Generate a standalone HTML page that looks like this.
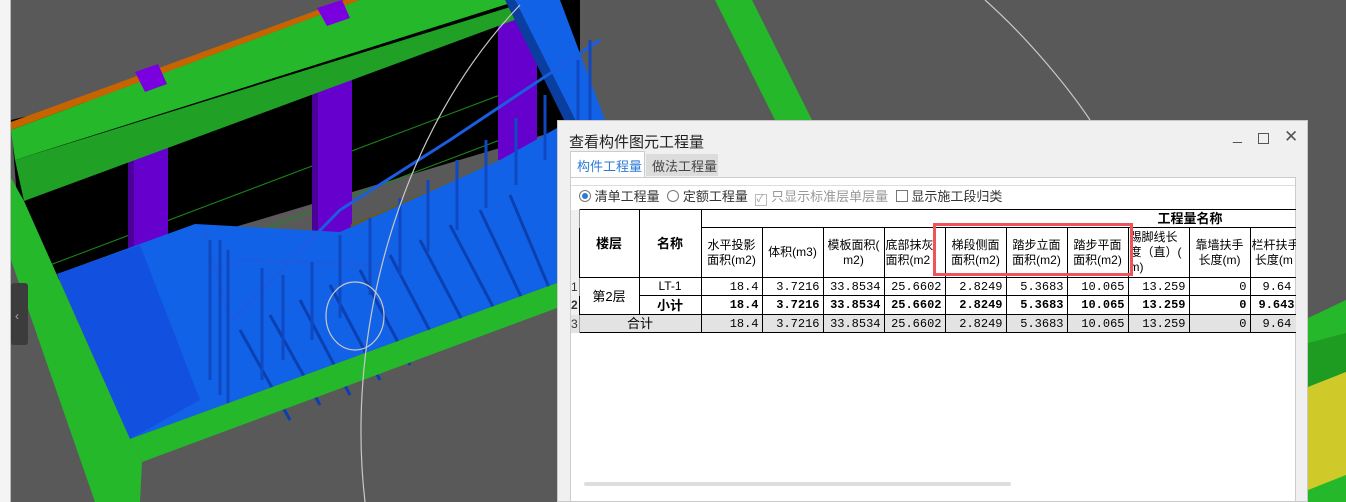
<!DOCTYPE html>
<html><head><meta charset="utf-8"><style>
*{margin:0;padding:0;box-sizing:border-box}
body{width:1346px;height:502px;overflow:hidden;background:#595959;position:relative;font-family:"Liberation Sans","Noto Sans CJK SC",sans-serif}
.abs{position:absolute}
#dlg{left:557px;top:120px;width:751px;height:382px;background:#f0f0f0;border:1px solid #c8c8c8}
.t{font-size:13px;color:#333}
table{border-collapse:collapse;table-layout:fixed;font-size:12px}
td{border:1px solid #000;height:18px;text-align:right;padding:0 3px;font-family:"Liberation Mono","Noto Sans CJK SC",monospace;font-size:12px;white-space:nowrap;overflow:hidden}
td.h{text-align:center;font-family:"Liberation Sans","Noto Sans CJK SC",sans-serif;line-height:15px;padding:0 1px}
td.rn{border:none;border-right:1px solid #999;background:#f0f0f0;text-align:left;padding:0;font-family:"Liberation Sans",sans-serif;color:#333}
tr.b td{font-weight:bold}
tr.g td{background:#e3e3e3}
</style></head><body>
<svg class="abs" style="left:0;top:0" width="1346" height="502">
<rect x="0" y="0" width="1346" height="502" fill="#595959"/>
<polygon points="11,120 520,0 580,0 580,130 560,130 24,290" fill="#000"/>
<line x1="50" y1="265" x2="500" y2="95" stroke="#1a8a1a" stroke-width="1"/>
<line x1="50" y1="310" x2="500" y2="140" stroke="#1a8a1a" stroke-width="1"/>
<polygon points="130,146 168,146 168,250 130,250" fill="#6600cc"/>
<polygon points="312,79 352,79 352,235 312,235" fill="#6600cc"/>
<polygon points="498,16 537,16 537,160 498,160" fill="#6600cc"/>
<rect x="128" y="146" width="6" height="104" fill="#4a0099"/>
<rect x="312" y="79" width="6" height="156" fill="#4a0099"/>
<polygon points="11,122 345,0 360,0 11,130" fill="#c86400"/>
<polygon points="11,130 360,0 520,0 15,160" fill="#25b82a"/>
<polygon points="15,160 520,4 520,18 24,201" fill="#20a024"/>
<polygon points="135,72 158,64 167,84 145,92" fill="#7a00e0"/>
<polygon points="317,8 342,0 350,18 327,26" fill="#7a00e0"/>
<polygon points="350,225 500,160 540,150 540,180 360,240" fill="#6b5a10"/>
<polygon points="57,274 195,224 340,232 500,160 557,128 557,283 130,439" fill="#1262e8"/>
<polygon points="57,274 140,245 200,400 130,439" fill="#1250e0"/>
<g stroke="#0a40b0" stroke-width="3">
<line x1="240" y1="330" x2="290" y2="420"/><line x1="270" y1="315" x2="320" y2="405"/>
<line x1="300" y1="300" x2="350" y2="395"/><line x1="330" y1="285" x2="380" y2="380"/>
<line x1="360" y1="270" x2="410" y2="365"/><line x1="390" y1="255" x2="440" y2="350"/>
<line x1="420" y1="240" x2="470" y2="335"/><line x1="450" y1="225" x2="500" y2="320"/>
<line x1="480" y1="210" x2="525" y2="305"/><line x1="510" y1="195" x2="550" y2="290"/>
</g>
<polygon points="515,0 560,0 605,120 580,130" fill="#1262e8"/>
<polygon points="505,0 515,0 578,125 568,128" fill="#0a3fa0"/>
<g stroke="#1a5de0" stroke-width="3" fill="none">
<path d="M205,232 L230,322 L340,210 L450,140 L600,40"/>
<path d="M210,270 L240,260 L380,265"/>
</g>
<g stroke="#0f48c0" stroke-width="3">
<line x1="210" y1="240" x2="210" y2="380"/><line x1="220" y1="240" x2="220" y2="395"/><line x1="228" y1="250" x2="228" y2="405"/>
<line x1="262" y1="268" x2="262" y2="380"/><line x1="283" y1="275" x2="283" y2="360"/><line x1="312" y1="262" x2="312" y2="340"/>
<line x1="340" y1="235" x2="340" y2="318"/><line x1="370" y1="218" x2="370" y2="295"/><line x1="400" y1="198" x2="400" y2="275"/>
<line x1="428" y1="180" x2="428" y2="252"/><line x1="457" y1="160" x2="457" y2="230"/><line x1="486" y1="140" x2="486" y2="208"/>
<line x1="516" y1="118" x2="516" y2="185"/><line x1="545" y1="95" x2="545" y2="160"/><line x1="578" y1="60" x2="578" y2="120"/>
<line x1="590" y1="40" x2="590" y2="120"/>
</g>
<polygon points="11,178 24,201 130,439 142,462 140,502 95,502 11,260" fill="#25b82a"/>
<polygon points="130,439 557,283 557,308 142,462" fill="#25b82a"/>
<polygon points="715,0 752,0 812,120 775,120" fill="#25b82a"/>
<polygon points="1308,318 1346,300 1346,502 1308,502" fill="#25b82a"/>
<polygon points="1308,343 1346,333 1346,372 1308,387" fill="#1e9c22"/>
<polygon points="1308,387 1346,372 1346,475 1308,490" fill="#cfca2a"/>
<g stroke="#c8c8c8" stroke-width="1.2" fill="none">
<path d="M365,502 C345,330 400,130 520,5"/>
<path d="M985,0 C1030,40 1070,90 1090,120"/>
<ellipse cx="355" cy="316" rx="29" ry="34"/>
</g>
<rect x="0" y="0" width="11" height="502" fill="#f4f4f4"/>
<rect x="10" y="0" width="1" height="502" fill="#bbb"/>
<rect x="11" y="283" width="17" height="62" fill="#3c3c3c" rx="3"/>
<text x="15" y="320" fill="#aaa" font-size="12" font-family="Liberation Sans">‹</text>
</svg>

<div id="dlg" class="abs">
<div class="abs" style="left:11px;top:10px;font-size:15px;color:#222;font-family:'Liberation Sans','Noto Sans CJK SC',sans-serif">查看构件图元工程量</div>
<div class="abs" style="left:675px;top:6px;font-size:16px;color:#555">_</div>
<div class="abs" style="left:700px;top:12px;width:11px;height:11px;border:1px solid #555"></div>
<div class="abs" style="left:726px;top:6px;font-size:17px;color:#555">✕</div>
<div class="abs" style="left:12px;top:30px;width:75px;height:27px;background:#fff;border:1px solid #ccc;border-bottom:none;font-size:13px;color:#2e7bd6;padding:4px 0 0 6px">构件工程量</div>
<div class="abs" style="left:88px;top:33px;width:72px;height:22px;background:#dcdcdc;font-size:13px;color:#444;padding:2px 0 0 6px">做法工程量</div>
<div class="abs" style="left:12px;top:56px;width:726px;height:324px;background:#fff;border:1px solid #ccc"></div>
<div class="abs" style="left:13px;top:64px;width:724px;height:316px;background:#fff;border-top:1px solid #ddd"></div>
<div class="abs t" style="left:21px;top:65px;white-space:nowrap">
<span style="display:inline-block;width:12px;height:12px;border:1px solid #777;border-radius:50%;vertical-align:-1px;position:relative"><span style="position:absolute;left:2px;top:2px;width:6px;height:6px;border-radius:50%;background:#2e7bd6"></span></span> 清单工程量
<span style="display:inline-block;width:12px;height:12px;border:1px solid #777;border-radius:50%;vertical-align:-1px;margin-left:4px"></span> 定额工程量
<span style="display:inline-block;width:12px;height:12px;border:1px solid #bbb;vertical-align:-1px;margin-left:4px;font-size:10px;color:#999;line-height:10px">✓</span> <span style="color:#999">只显示标准层单层量</span>
<span style="display:inline-block;width:12px;height:12px;border:1px solid #777;vertical-align:-1px;margin-left:4px"></span> 显示施工段归类
</div>
<div class="abs" style="left:13px;top:88px;width:725px;height:160px;overflow:hidden">
<table style="width:740px">
<colgroup><col style="width:8px"><col style="width:60px"><col style="width:62px"><col style="width:61px"><col style="width:61px"><col style="width:61px"><col style="width:61px"><col style="width:61px"><col style="width:61px"><col style="width:61px"><col style="width:61px"><col style="width:61px"><col style="width:61px"></colgroup>
<tr style="height:18px"><td class="rn"></td><td class="h" rowspan="2" style="font-weight:bold;font-size:13px">楼层</td><td class="h" rowspan="2" style="font-weight:bold;font-size:13px">名称</td><td class="h" colspan="10" style="border-bottom:1px solid #000;font-weight:bold;font-size:13px;text-align:left;padding-left:456px">工程量名称</td></tr>
<tr style="height:50px"><td class="rn"></td><td class="h">水平投影<br>面积(m2)</td><td class="h">体积(m3)</td><td class="h">模板面积(<br>m2)</td><td class="h" style="text-align:left">底部抹灰<br>面积(m2</td><td class="h">梯段侧面<br>面积(m2)</td><td class="h">踏步立面<br>面积(m2)</td><td class="h">踏步平面<br>面积(m2)</td><td class="h" style="text-align:left">踢脚线长<br>度（直）(<br>m)</td><td class="h">靠墙扶手<br>长度(m)</td><td class="h" style="text-align:left">栏杆扶手<br>&nbsp;长度(m</td></tr>
<tr><td class="rn">1</td><td class="h" rowspan="2" style="font-size:13px">第2层</td><td class="h">LT-1</td><td>18.4</td><td>3.7216</td><td>33.8534</td><td>25.6602</td><td>2.8249</td><td>5.3683</td><td>10.065</td><td>13.259</td><td>0</td><td style="text-align:left;padding-left:12px">9.64</td></tr>
<tr class="b" style="height:19px"><td class="rn">2</td><td class="h" style="font-weight:bold;font-size:13px">小计</td><td>18.4</td><td>3.7216</td><td>33.8534</td><td>25.6602</td><td>2.8249</td><td>5.3683</td><td>10.065</td><td>13.259</td><td>0</td><td style="text-align:left;padding-left:8px">9.643</td></tr>
<tr class="g"><td class="rn" style="background:#e3e3e3">3</td><td class="h" colspan="2" style="font-size:13px">合计</td><td>18.4</td><td>3.7216</td><td>33.8534</td><td>25.6602</td><td>2.8249</td><td>5.3683</td><td>10.065</td><td>13.259</td><td>0</td><td style="text-align:left;padding-left:12px">9.64</td></tr>
</table>
</div>
<div class="abs" style="left:375px;top:102px;width:200px;height:53px;border:3px solid #f0545a"></div>
<div class="abs" style="left:26px;top:361px;width:427px;height:4px;background:#ddd;border-radius:2px"></div>
</div>
</body></html>
